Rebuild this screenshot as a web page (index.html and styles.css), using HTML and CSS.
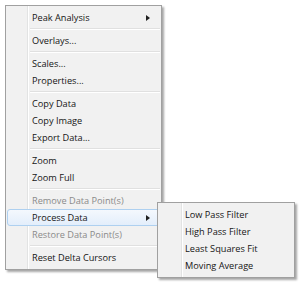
FILE: index.html
```html
<!DOCTYPE html>
<html lang="en">

<head>
    <meta charset="UTF-8">
    <title>Context Menu</title>
    <link rel="stylesheet" href="styles.css">
</head>

<body>
    <div class="screen">
        <div class="menu main-menu">
            <div class="item has-sub">Peak Analysis</div>
            <div class="sep"></div>
            <div class="item">Overlays...</div>
            <div class="sep"></div>
            <div class="item">Scales...</div>
            <div class="item">Properties...</div>
            <div class="sep"></div>
            <div class="item">Copy Data</div>
            <div class="item">Copy Image</div>
            <div class="item">Export Data...</div>
            <div class="sep"></div>
            <div class="item">Zoom</div>
            <div class="item">Zoom Full</div>
            <div class="sep"></div>
            <div class="item disabled">Remove Data Point(s)</div>
            <div class="item has-sub active">Process Data</div>
            <div class="item disabled">Restore Data Point(s)</div>
            <div class="sep"></div>
            <div class="item">Reset Delta Cursors</div>
        </div>

        <div class="menu sub-menu">
            <div class="item">Low Pass Filter</div>
            <div class="item">High Pass Filter</div>
            <div class="item">Least Squares Fit</div>
            <div class="item">Moving Average</div>
        </div>
    </div>
</body>

</html>
```

FILE: styles.css
```css
body {
    margin: 0;
    padding: 0;
    background-color: #ffffff;
    font-family: "Open Sans", "Noto Sans", sans-serif;
    font-size: 9.2px;
    color: #151515;
}

.screen {
    position: relative;
    width: 303px;
    height: 282px;
    padding: 5px 0 0 5px;
    box-sizing: border-box;
}

.menu {
    border: 1px solid #a0a0a0;
    background: linear-gradient(to right, transparent 21px, #e2e3e3 21px, #e2e3e3 22px, #ffffff 22px, #ffffff 23px, transparent 23px), #f1f1f1;
    box-shadow: 2px 2px 2px rgba(0, 0, 0, 0.35);
    padding: 3px 0;
}

.main-menu {
    width: 155px;
}

.sub-menu {
    position: absolute;
    left: 157px;
    top: 202px;
    width: 136px;
    padding: 3px 0;
    background: linear-gradient(to right, transparent 23px, #e2e3e3 23px, #e2e3e3 24px, #ffffff 24px, #ffffff 25px, transparent 25px), #f1f1f1;
}

.item {
    position: relative;
    height: 17px;
    line-height: 17px;
    padding-left: 24px;
    margin: 0 1px;
    border: 1px solid transparent;
    border-width: 0 1px;
    border-radius: 3px;
    white-space: nowrap;
}

.sub-menu .item {
    padding-left: 25px;
}

.item.disabled {
    color: #8a8a8a;
}

.item.active {
    border: 1px solid #aed0f0;
    height: 15px;
    line-height: 15px;
    background: linear-gradient(#f4f8fd, #e3eefb);
}

.has-sub::after {
    content: "";
    position: absolute;
    right: 9px;
    top: 50%;
    margin-top: -3px;
    border-left: 4px solid #202020;
    border-top: 3px solid transparent;
    border-bottom: 3px solid transparent;
}

.sep {
    height: 1px;
    margin: 2px 1px 2px 24px;
    background-color: #e0e0e0;
    border-bottom: 1px solid #ffffff;
}
```
